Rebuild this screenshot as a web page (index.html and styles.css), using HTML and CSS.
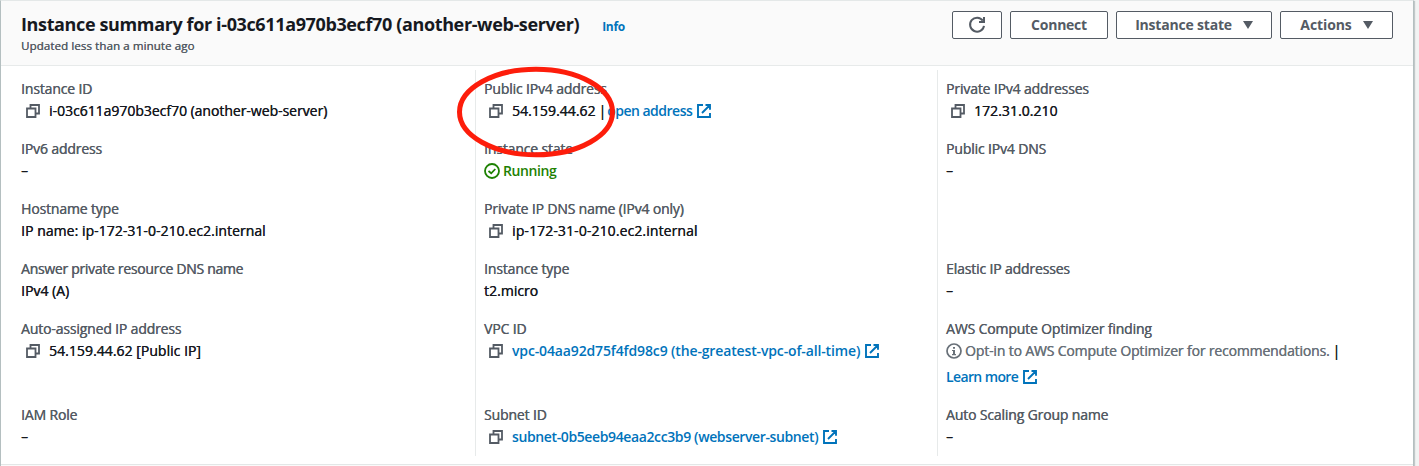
FILE: index.html
```html
<!DOCTYPE html>
<html lang="en">
<head>
<meta charset="utf-8">
<title>Instance summary</title>
<link rel="stylesheet" href="styles.css">
</head>
<body>
<svg width="0" height="0" class="sprite">
  <defs>
    <symbol id="copy" viewBox="0 0 14 14"><path d="M1 4.500h8.500V13H1zM4.500 4.500V1H13v8.500H9.500" fill="none" stroke="currentColor" stroke-width="1.800"/></symbol>
    <symbol id="external" viewBox="0 0 14 14"><path d="M6 1H1v12h12V9M8.500 1H13v4.800M13 1 5 9" fill="none" stroke="currentColor" stroke-width="1.900"/></symbol>
    <symbol id="check" viewBox="0 0 16 16"><circle cx="8" cy="8" r="7" fill="none" stroke="currentColor" stroke-width="1.800"/><path d="M4.500 8 7.200 10.300 11.300 6" fill="none" stroke="currentColor" stroke-width="1.800"/></symbol>
    <symbol id="info" viewBox="0 0 16 16"><circle cx="8" cy="8" r="7" fill="none" stroke="currentColor" stroke-width="1.700"/><path d="M7 4h2v1.800H7zM6 7h3v4h1v1.200H6V11h1V8H6z" fill="currentColor"/></symbol>
    <symbol id="refresh" viewBox="0 0 18 18"><path d="M14.800 4.600A7 7 0 1 0 16 9.800" fill="none" stroke="currentColor" stroke-width="2"/><path d="M16 1v5h-5" fill="none" stroke="currentColor" stroke-width="2"/></symbol>
  </defs>
</svg>
<main class="panel">
  <header class="header">
    <div class="heading">
      <div class="title-row"><h1 class="title">Instance summary for i-03c611a970b3ecf70 (another-web-server)</h1><a class="info-link">Info</a></div>
      <div class="updated">Updated less than a minute ago</div>
    </div>
    <div class="actions">
      <button class="btn btn-refresh" aria-label="Refresh"><svg class="refresh"><use href="#refresh"/></svg></button>
      <button class="btn btn-connect"><span>Connect</span></button>
      <button class="btn btn-state"><span>Instance state</span><i class="caret"></i></button>
      <button class="btn btn-actions"><span>Actions</span><i class="caret"></i></button>
    </div>
  </header>
  <section class="columns">
    <div class="column">
      <div class="field"><div class="label">Instance ID</div><div class="value"><svg class="copy"><use href="#copy"/></svg><span class="id">i-03c611a970b3ecf70 (another-web-server)</span></div></div>
      <div class="field"><div class="label">IPv6 address</div><div class="value">–</div></div>
      <div class="field"><div class="label">Hostname type</div><div class="value"><span class="host-name">IP name: ip-172-31-0-210.ec2.internal</span></div></div>
      <div class="field"><div class="label tight">Answer private resource DNS name</div><div class="value">IPv4 (A)</div></div>
      <div class="field"><div class="label">Auto-assigned IP address</div><div class="value"><svg class="copy"><use href="#copy"/></svg><span class="ip">54.159.44.62 [Public IP]</span></div></div>
      <div class="field"><div class="label">IAM Role</div><div class="value">–</div></div>
    </div>
    <div class="column">
      <div class="field"><div class="label">Public IPv4 address</div><div class="value"><svg class="copy"><use href="#copy"/></svg><span class="ip">54.159.44.62</span><span class="bar">|</span><a class="link open">open address</a><svg class="external"><use href="#external"/></svg></div></div>
      <div class="field"><div class="label">Instance state</div><div class="value running"><svg class="status"><use href="#check"/></svg><span>Running</span></div></div>
      <div class="field"><div class="label">Private IP DNS name (IPv4 only)</div><div class="value"><svg class="copy"><use href="#copy"/></svg><span class="host">ip-172-31-0-210.ec2.internal</span></div></div>
      <div class="field"><div class="label">Instance type</div><div class="value">t2.micro</div></div>
      <div class="field"><div class="label">VPC ID</div><div class="value"><svg class="copy"><use href="#copy"/></svg><a class="link vpc">vpc-04aa92d75f4fd98c9 (the-greatest-vpc-of-all-time)</a><svg class="external"><use href="#external"/></svg></div></div>
      <div class="field"><div class="label">Subnet ID</div><div class="value"><svg class="copy"><use href="#copy"/></svg><a class="link subnet">subnet-0b5eeb94eaa2cc3b9 (webserver-subnet)</a><svg class="external"><use href="#external"/></svg></div></div>
    </div>
    <div class="column">
      <div class="field"><div class="label">Private IPv4 addresses</div><div class="value"><svg class="copy"><use href="#copy"/></svg><span class="ip">172.31.0.210</span></div></div>
      <div class="field"><div class="label">Public IPv4 DNS</div><div class="value">–</div></div>
      <div class="field"></div>
      <div class="field"><div class="label">Elastic IP addresses</div><div class="value">–</div></div>
      <div class="field"><div class="label">AWS Compute Optimizer finding</div><div class="value optin"><svg class="status"><use href="#info"/></svg><span class="optin-text">Opt-in to AWS Compute Optimizer for recommendations.</span><span class="bar">|</span></div><div class="value more"><a class="link learn">Learn more</a><svg class="external"><use href="#external"/></svg></div></div>
      <div class="field"><div class="label">Auto Scaling Group name</div><div class="value">–</div></div>
    </div>
  </section>
  <svg class="annotation" viewBox="0 0 160 94"><ellipse cx="80" cy="47" rx="76.500" ry="42.800" fill="none" stroke="#fd1d0b" stroke-width="5"/></svg>
</main>
</body>
</html>
```
FILE: styles.css
```css
* { box-sizing: border-box; }
body { margin: 0; height: 466px; overflow: hidden; background: #f2f3f3; font-family: "Open Sans", sans-serif; font-size: 14px; line-height: 22px; color: #16191f; }
.sprite { display: block; height: 0; }
.panel { position: relative; width: 1414px; height: 468px; background: #fafafa; border: 1px solid #b4bfc0; border-top-color: #e4e8e8; box-shadow: 1px 1px 1px rgba(0, 28, 36, .2); }
.header { height: 65px; background: #fafafa; border-bottom: 1px solid #e7eaea; display: flex; justify-content: space-between; padding: 10px 20px 0; }
.heading { margin-top: -1px; }
.title-row { display: flex; align-items: baseline; gap: 23px; height: 28px; }
.title { margin: 0; font-size: 18px; line-height: 28px; font-weight: 700; letter-spacing: -.37px; white-space: nowrap; }
.info-link { font-size: 12px; font-weight: 700; letter-spacing: -.3px; color: #0073bb; }
.updated { margin-top: 1px; font-size: 11.500px; line-height: 14px; letter-spacing: .1px; color: #545b64; text-shadow: .3px 0 0 currentColor; }
.actions { display: flex; gap: 8px; }
.btn { height: 28px; display: flex; align-items: center; justify-content: center; gap: 11px; background: #fff; border: 1px solid #545b64; border-radius: 2px; padding: 0; color: #545b64; font: 700 14px/22px "Open Sans", sans-serif; letter-spacing: -.25px; white-space: nowrap; }
.btn-refresh { width: 50px; }
.btn-connect { width: 98px; }
.btn-state { width: 156px; letter-spacing: -.2px; }
.btn-actions { width: 113px; letter-spacing: -.1px; }
.refresh { width: 18px; height: 18px; }
.caret { border: 5.500px solid transparent; border-top: 8px solid #545b64; border-bottom: 0; }
.columns { display: grid; grid-template-columns: 474px 462px 1fr; height: 399px; padding-top: 4px; background: #fff; border-bottom: 1px solid #e3e7e7; }
.column { display: grid; grid-template-rows: repeat(4, 44px) 70px 44px; row-gap: 16px; height: 386px; padding: 8px 8px 0; border-left: 1px solid #e7eaea; }
.column:first-child { padding-left: 20px; border-left: 0; }
.label { color: #545b64; letter-spacing: -.16px; white-space: nowrap; text-shadow: .35px 0 0 currentColor; }
.label.tight { letter-spacing: -.3px; }
.value { display: flex; align-items: center; height: 22px; white-space: nowrap; text-shadow: .3px 0 0 currentColor; }
.copy { width: 14px; height: 14px; margin: 0 9px 0 5px; color: #545b64; }
.external { width: 14px; height: 14px; margin-left: 4.500px; color: #0073bb; }
.link { color: #0073bb; font-weight: 600; text-shadow: none; }
.open { letter-spacing: -.5px; }
.vpc { letter-spacing: -.14px; }
.subnet { letter-spacing: -.38px; }
.learn { letter-spacing: -.62px; }
.id { letter-spacing: -.03px; }
.ip { letter-spacing: .03px; }
.host { letter-spacing: .1px; }
.host-name { letter-spacing: .04px; }
.optin-text { letter-spacing: -.16px; }
.bar { margin: 0 1px 0 3px; }
.status { width: 16px; height: 16px; margin-right: 3px; }
.running { color: #1d8102; font-weight: 600; letter-spacing: -.4px; text-shadow: none; }
.optin { color: #687078; }
.optin .bar { color: #16191f; }
.more { margin-top: 4px; }
.annotation { position: absolute; left: 455px; top: 64px; width: 160px; height: 94px; }
```
